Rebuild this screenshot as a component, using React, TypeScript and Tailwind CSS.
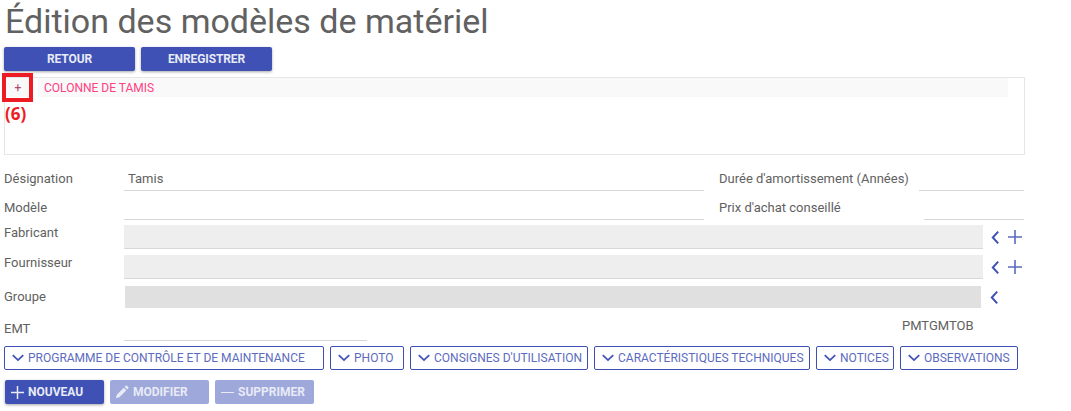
const sections = [
  { label: 'PROGRAMME DE CONTRÔLE ET DE MAINTENANCE', width: 'w-[320px]' },
  { label: 'PHOTO', width: 'w-[74px]' },
  { label: "CONSIGNES D'UTILISATION", width: 'w-[178px]' },
  { label: 'CARACTÉRISTIQUES TECHNIQUES', width: 'w-[216px]' },
  { label: 'NOTICES', width: 'w-[78px]' },
  { label: 'OBSERVATIONS', width: 'w-[118px]' },
];

function Chevron({ className }: { className: string }) {
  return (
    <svg viewBox="0 0 24 24" className={className} fill="none" stroke="currentColor" strokeWidth="3">
      <path d="M3 7l9 8.5L21 7" />
    </svg>
  );
}

function ChevronLeft() {
  return (
    <svg viewBox="0 0 10 16" className="h-[15px] w-[9px] text-[#3f51b5]" fill="none" stroke="currentColor" strokeWidth="2.2">
      <path d="M8 1.5L2 8l6 6.5" />
    </svg>
  );
}

function Plus({ className }: { className: string }) {
  return (
    <svg viewBox="0 0 16 16" className={className} fill="none" stroke="currentColor" strokeWidth="1.6">
      <path d="M8 1v14M1 8h14" />
    </svg>
  );
}

function SelectRow({ label, labelClass, barClass, withPlus }: { label: string; labelClass: string; barClass: string; withPlus?: boolean }) {
  return (
    <div className="flex items-center">
      <span className={`w-[120px] shrink-0 ${labelClass}`}>{label}</span>
      <div className={barClass} />
      <div className="flex items-center">
        <ChevronLeft />
        {withPlus && <Plus className="ml-[7px] h-[16px] w-[16px] text-[#5c6bc0]" />}
      </div>
    </div>
  );
}

export default function App() {
  return (
    <div className="relative h-[411px] w-[1071px] overflow-hidden bg-white pl-[4px] font-['Roboto',sans-serif] text-[13px] text-[#616161]">
      <h1 className="ml-[1px] h-[47px] text-[34px] leading-[42px] font-normal text-[#616161]">Édition des modèles de matériel</h1>

      <div className="flex gap-[6px]">
        <button className="h-[24px] w-[131px] rounded-[2px] bg-[#3f51b5] text-[12px] font-bold tracking-[-0.1px] text-[#e8eaf6] shadow-[0_1px_3px_rgba(0,0,0,0.35)]">RETOUR</button>
        <button className="h-[24px] w-[131px] rounded-[2px] bg-[#3f51b5] text-[12px] font-bold tracking-[-0.1px] text-[#e8eaf6] shadow-[0_1px_3px_rgba(0,0,0,0.35)]">ENREGISTRER</button>
      </div>

      <div className="mt-[6px] h-[78px] w-[1021px] border border-[#e6e6e6] pl-[2px]">
        <div className="flex h-[19px] gap-[9px] text-[12px] text-[#ff4081]">
          <span className="flex w-[22px] items-center justify-center bg-[#f9f9f9] text-[#b0476b]">+</span>
          <span className="flex w-[970px] items-center bg-[#f9f9f9] pl-[6px]">COLONNE DE TAMIS</span>
        </div>
      </div>

      {/* Champs texte */}
      <div className="mt-[12px] flex h-[24px] items-center">
        <span className="w-[120px] shrink-0">Désignation</span>
        <div className="flex h-[24px] w-[580px] items-center border-b border-[#d6d6d6] pl-[4px]">Tamis</div>
        <span className="ml-[15px] w-[200px] shrink-0">Durée d'amortissement (Années)</span>
        <div className="h-[24px] w-[105px] border-b border-[#d6d6d6]" />
      </div>
      <div className="mt-[5px] flex h-[24px] items-center">
        <span className="w-[120px] shrink-0">Modèle</span>
        <div className="h-[24px] w-[580px] border-b border-[#d6d6d6]" />
        <span className="ml-[15px] w-[205px] shrink-0">Prix d'achat conseillé</span>
        <div className="h-[24px] w-[100px] border-b border-[#d6d6d6]" />
      </div>

      {/* Listes */}
      <div className="mt-[5px] flex flex-col">
        <SelectRow label="Fabricant" labelClass="-translate-y-[4px]" barClass="mr-[8px] h-[24px] w-[859px] border-b border-[#d8d8d8] bg-[#eeeeee]" withPlus />
        <div className="mt-[6px]">
          <SelectRow label="Fournisseur" labelClass="-translate-y-[4px]" barClass="mr-[8px] h-[24px] w-[859px] border-b border-[#d8d8d8] bg-[#eeeeee]" withPlus />
        </div>
        <div className="mt-[7px] flex items-center">
          <span className="w-[121px] shrink-0">Groupe</span>
          <div className="mr-[9px] h-[22px] w-[856px] bg-[#e0e0e0]" />
          <ChevronLeft />
        </div>
      </div>

      <div className="mt-[9px] flex h-[24px] items-end">
        <span className="w-[120px] shrink-0 pb-[3px]">EMT</span>
        <div className="h-[24px] w-[243px] border-b border-[#d6d6d6]" />
        <span className="ml-[535px] self-start text-[13px] leading-[18px]">PMTGMTOB</span>
      </div>

      {/* Sections */}
      <div className="mt-[5px] flex gap-[6px]">
        {sections.map((s) => (
          <button key={s.label} className={`flex h-[24px] items-center rounded-[2px] border border-[#3f51b5] pl-[6px] text-[12px] whitespace-nowrap text-[#5c6bc0] ${s.width}`}>
            <Chevron className="mr-[3px] h-[14px] w-[14px] shrink-0 text-[#3f51b5]" />
            {s.label}
          </button>
        ))}
      </div>

      <div className="mt-[10px] ml-[1px] flex gap-[6px] text-[12px] font-bold text-[#e8eaf6]">
        <button className="flex h-[24px] w-[99px] items-center rounded-[2px] bg-[#3f51b5] pl-[5px] shadow-[0_1px_3px_rgba(0,0,0,0.35)]">
          <Plus className="mr-[3px] h-[15px] w-[15px]" />
          NOUVEAU
        </button>
        <button className="flex h-[24px] w-[99px] items-center rounded-[2px] bg-[#9fa8da] pl-[5px]">
          <svg viewBox="0 0 16 16" className="mr-[4px] h-[14px] w-[14px]" fill="currentColor">
            <path d="M1 15l1-4 8-8 3 3-8 8zM11 2l1.2-1.2a1 1 0 011.4 0l1.6 1.6a1 1 0 010 1.4L14 5z" />
          </svg>
          MODIFIER
        </button>
        <button className="flex h-[24px] w-[99px] items-center rounded-[2px] bg-[#9fa8da] pl-[6px]">
          <span className="mr-[4px] h-[1px] w-[13px] bg-current" />
          SUPPRIMER
        </button>
      </div>

      {/* Annotation rouge */}
      <div className="absolute top-[73px] left-[2px] h-[29px] w-[31px] border-[4px] border-[#ed1c24]" />
      <span className="absolute top-[103px] left-[5px] font-['Open_Sans',sans-serif] text-[17px] leading-[22px] font-bold text-[#ed1c24]">(6)</span>
    </div>
  );
}
